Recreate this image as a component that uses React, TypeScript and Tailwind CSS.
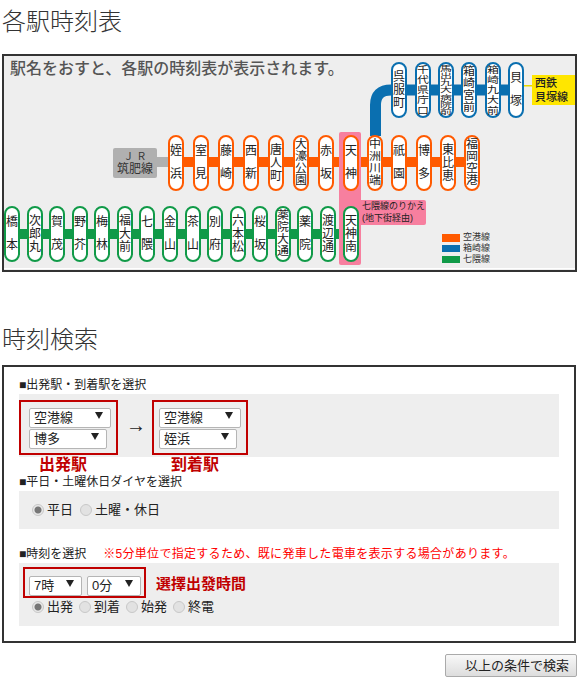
const FONT = 'font-["Liberation_Sans","Noto_Sans_CJK_JP",sans-serif]'

type Station = { name: string; x: number }

const KUKO: Station[] = [
  { name: '姪浜', x: 168 },
  { name: '室見', x: 193 },
  { name: '藤崎', x: 218 },
  { name: '西新', x: 243 },
  { name: '唐人町', x: 268 },
  { name: '大濠公園', x: 293 },
  { name: '赤坂', x: 318 },
  { name: '天神', x: 343 },
  { name: '中洲川端', x: 367 },
  { name: '祇園', x: 391 },
  { name: '博多', x: 416 },
  { name: '東比恵', x: 440 },
  { name: '福岡空港', x: 464 },
]

const HAKOZAKI: Station[] = [
  { name: '呉服町', x: 391 },
  { name: '千代県庁口', x: 415 },
  { name: '馬出九大病院前', x: 438 },
  { name: '箱崎宮前', x: 461 },
  { name: '箱崎九大前', x: 485 },
  { name: '貝塚', x: 508 },
]

const NANAKUMA: Station[] = [
  { name: '橋本', x: 4 },
  { name: '次郎丸', x: 27 },
  { name: '賀茂', x: 49 },
  { name: '野芥', x: 72 },
  { name: '梅林', x: 94 },
  { name: '福大前', x: 117 },
  { name: '七隈', x: 139 },
  { name: '金山', x: 162 },
  { name: '茶山', x: 185 },
  { name: '別府', x: 207 },
  { name: '六本松', x: 230 },
  { name: '桜坂', x: 252 },
  { name: '薬院大通', x: 275 },
  { name: '薬院', x: 297 },
  { name: '渡辺通', x: 320 },
  { name: '天神南', x: 343 },
]

function Pill({ name, x, y, border }: Station & { y: number; border: string }) {
  const chars = name.split('')
  const squeeze =
    chars.length >= 7 ? 'scale-y-[0.56]' : chars.length === 5 ? 'scale-y-[0.78]' : chars.length === 4 ? 'scale-y-[0.92]' : ''
  return (
    <div
      className={`absolute flex h-[56px] w-[16px] items-center justify-center rounded-full border-2 bg-white ${border}`}
      style={{ left: x - 4, top: y - 56 }}
    >
      <div className={`flex flex-col items-center text-[12px] leading-[13px] text-[#222] ${chars.length === 2 ? 'gap-[10px]' : ''} ${squeeze}`}>
        {chars.map((c, i) => (
          <span key={i}>{c}</span>
        ))}
      </div>
    </div>
  )
}

function RouteMap() {
  return (
    <div className="relative ml-[2px] h-[218px] w-[575px] overflow-hidden border-2 border-[#333] bg-[#eeeeee]">
      <svg className="absolute inset-0" width="571" height="214" viewBox="4 56 571 214">
        <rect x="155" y="157" width="15" height="10" fill="#b0b0b0" />
        <rect x="170" y="157" width="300" height="10" fill="#ff5a00" />
        <rect x="10" y="229" width="340" height="10" fill="#109a48" />
        <path d="M375.5 136 V105 Q375.5 90 391 90 H515" fill="none" stroke="#0a6fb0" strokeWidth="11" />
        <rect x="520" y="85" width="14" height="1.5" fill="#e8d800" />
        <rect x="4" y="268" width="571" height="1" fill="#ffffff" />
      </svg>

      <p className="absolute left-[6px] top-[3px] text-[16px] leading-[20px] font-medium whitespace-nowrap text-[#555]">
        駅名をおすと、各駅の時刻表が表示されます。
      </p>

      {/* 天神の乗換帯 */}
      <div className="absolute left-[335px] top-[76px] h-[133px] w-[22px] rounded-[2px] bg-[#f77f9f]" />
      <div className="absolute left-[357px] top-[144px] h-[25px] w-[65px] rounded-r-[2px] bg-[#f77f9f] pl-[1px] text-[9px] leading-[12px] whitespace-nowrap text-[#222]">
        <div>七隈線のりかえ</div>
        <div>(地下街経由)</div>
      </div>

      <div className="absolute left-[109px] top-[92px] flex h-[30px] w-[44px] flex-col items-center justify-center rounded-[2px] bg-[#b0b0b0] text-[12px] leading-[13px] text-[#333]">
        <div className="text-[10px]">Ｊ Ｒ</div>
        <div>筑肥線</div>
      </div>

      <div className="absolute left-[528px] top-[19px] flex h-[30px] w-[43px] flex-col justify-center bg-[#ffe600] pl-[3px] text-[11px] leading-[14px] font-medium text-[#222]">
        <div>西鉄</div>
        <div>貝塚線</div>
      </div>

      {KUKO.map((s) => (
        <Pill key={s.name} {...s} y={135} border="border-[#ff5a00]" />
      ))}
      {HAKOZAKI.map((s) => (
        <Pill key={s.name} {...s} y={62} border="border-[#0a6fb0]" />
      ))}
      {NANAKUMA.map((s) => (
        <Pill key={s.name} {...s} y={206} border="border-[#109a48]" />
      ))}

      <div className="absolute left-[438px] top-[177px] flex flex-col gap-[2px] text-[9px] leading-[9px] text-[#333]">
        <div className="flex items-center gap-[3px]">
          <span className="h-[8px] w-[18px] bg-[#ff5a00]" />
          空港線
        </div>
        <div className="flex items-center gap-[3px]">
          <span className="h-[7px] w-[18px] bg-[#0a6fb0]" />
          箱崎線
        </div>
        <div className="flex items-center gap-[3px]">
          <span className="h-[7px] w-[18px] bg-[#109a48]" />
          七隈線
        </div>
      </div>
    </div>
  )
}

function Select({ value, w }: { value: string; w: string }) {
  return (
    <div className={`relative h-[20px] ${w}`}>
      <select
        defaultValue={value}
        className="h-full w-full appearance-none rounded-[2px] border border-[#b5b5b5] bg-white pl-[4px] text-[13px] leading-[18px] text-[#222]"
      >
        <option>{value}</option>
      </select>
      <span className="pointer-events-none absolute right-[8px] top-[7px] h-0 w-0 border-x-[4px] border-t-[7px] border-x-transparent border-t-[#222]" />
    </div>
  )
}

function Radio({ label, checked }: { label: string; checked?: boolean }) {
  return (
    <label className="flex items-center gap-[3px] text-[13px] leading-[14px] text-[#222]">
      <input
        type="radio"
        defaultChecked={checked}
        className="h-[12px] w-[12px] appearance-none rounded-full border border-[#c8c8c8] bg-[#e2e2e2] checked:bg-[radial-gradient(circle,#777_0,#777_3px,#e8e8e8_4px)]"
      />
      {label}
    </label>
  )
}

function Label({ children }: { children: React.ReactNode }) {
  return <div className="flex h-[18px] items-center text-[12px] whitespace-nowrap text-[#222]">{children}</div>
}

export default function App() {
  return (
    <div className={`h-[688px] w-[580px] overflow-hidden bg-white ${FONT}`}>
      <h2 className="mt-[8px] ml-[2px] h-[28px] text-[24px] leading-[28px] font-light text-[#333]">各駅時刻表</h2>
      <div className="mt-[18px]">
        <RouteMap />
      </div>

      <h2 className="mt-[54px] ml-[2px] h-[28px] text-[24px] leading-[28px] font-light text-[#333]">時刻検索</h2>

      <div className="mt-[11px] ml-[2px] h-[278px] w-[574px] border-2 border-[#333] px-[15px] pt-[9px]">
        <Label>■出発駅・到着駅を選択</Label>
        <div className="flex h-[63px] items-start bg-[#eeeeee] pt-[6px]">
          <div className="flex h-[55px] w-[99px] flex-col gap-[1px] border-2 border-[#c00000] pt-[3px] pl-[8px]">
            <Select value="空港線" w="w-[82px]" />
            <Select value="博多" w="w-[78px]" />
          </div>
          <span className="mx-[8px] mt-[15px] w-[18px] text-center text-[20px] leading-[20px] text-[#222]">→</span>
          <div className="flex h-[55px] w-[96px] flex-col gap-[1px] border-2 border-[#c00000] pt-[3px] pl-[5px]">
            <Select value="空港線" w="w-[82px]" />
            <Select value="姪浜" w="w-[78px]" />
          </div>
        </div>
        <div className="flex h-[16px] items-center text-[16px] font-bold text-[#c00000]">
          <span className="ml-[20px]">出発駅</span>
          <span className="ml-[84px]">到着駅</span>
        </div>

        <Label>■平日・土曜休日ダイヤを選択</Label>
        <div className="flex h-[38px] items-center gap-[7px] bg-[#eeeeee] pl-[13px]">
          <Radio label="平日" checked />
          <Radio label="土曜・休日" />
        </div>

        <div className="mt-[16px] flex h-[18px] items-center whitespace-nowrap text-[12px] text-[#222]">
          ■時刻を選択
          <span className="ml-[17px] tracking-[0.3px] text-[#ff0000]">※5分単位で指定するため、既に発車した電車を表示する場合があります。</span>
        </div>
        <div className="h-[63px] bg-[#eeeeee] pt-[4px]">
          <div className="flex items-center">
            <div className="ml-[4px] flex h-[31px] w-[123px] gap-[5px] border-2 border-[#c00000] pt-[4px] pl-[4px]">
              <Select value="7時" w="w-[53px]" />
              <Select value="0分" w="w-[54px]" />
            </div>
            <span className="mt-[3px] ml-[10px] text-[15px] font-bold whitespace-nowrap text-[#c00000]">選擇出發時間</span>
          </div>
          <div className="mt-[2px] flex gap-[6px] pl-[13px]">
            <Radio label="出発" checked />
            <Radio label="到着" />
            <Radio label="始発" />
            <Radio label="終電" />
          </div>
        </div>
      </div>

      <div className="mt-[11px] flex justify-end pr-[3px]">
        <button className="h-[23px] w-[132px] rounded-[2px] border border-[#aaa] bg-gradient-to-b from-[#f8f8f8] to-[#dddddd] pl-[12px] text-center text-[13px] leading-[21px] text-[#222]">
          以上の条件で検索
        </button>
      </div>
    </div>
  )
}
